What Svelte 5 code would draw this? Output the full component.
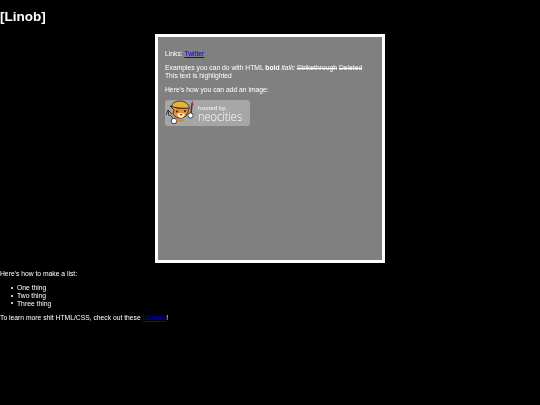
<script>
  const items = ['One thing', 'Two thing', 'Three thing'];
</script>

<div class="page">
  <h1>[Linob]</h1>
  <div class="box">
    <p>Links: <a href="#t">Twitter</a></p>
    <p>Examples you can do with HTML <b>bold</b> <i>italic</i> <s>Strikethrough</s> <s>Deleted</s><br />This text is highlighted</p>
    <p class="last">Here's how you can add an image:</p>
    <div class="badge">
      <svg class="mascot" width="33" height="26" viewBox="0 0 33 26">
        <path d="M6 7 Q8 1 15 1 Q21 1 24 6 L24 9 L14 8 Z" fill="#e8b23a" stroke="#3a2a1a" stroke-width="0.9" />
        <path d="M5 6 L9 10 L8 14 Q11 19 17 18 Q22 17 23 12 L24 8 Q14 10 5 6 Z" fill="#e8902f" stroke="#3a2a1a" stroke-width="0.9" />
        <path d="M12 14 Q16 12 20 14 Q19 18 15.5 18 Q13 17.5 12 14 Z" fill="#fbe9cf" />
        <circle cx="12" cy="11.5" r="1" fill="#222" />
        <circle cx="20" cy="11" r="1" fill="#222" />
        <path d="M15 14 L17.5 14 L16 16 Z" fill="#5a2a1a" />
        <path d="M27 4 L26 13" stroke="#5b2d20" stroke-width="1.6" />
        <path d="M27.3 0.5 L28.6 5 L25.8 5 Z" fill="#8b3a3a" />
        <circle cx="25.5" cy="15.5" r="2.6" fill="#fff" stroke="#333" stroke-width="0.9" />
        <path d="M3 10 L1 15 M3 10 L4 16 M3 10 L7 14 M5 15 L9 19" stroke="#333" stroke-width="1" fill="none" />
        <circle cx="9" cy="21" r="2.8" fill="#fff" stroke="#333" stroke-width="0.9" />
        <path d="M11 19 Q14 22 19 20" stroke="#d8872c" stroke-width="2" fill="none" />
      </svg>
      <div class="brand">
        <span class="hosted">hosted by,</span>
        <span class="neo">neocities</span>
      </div>
    </div>
  </div>
  <p>Here's how to make a list:</p>
  <ul>
    {#each items as item}
      <li>{item}</li>
    {/each}
  </ul>
  <p>To learn more shit HTML/CSS, check out these <a href="#l">tutorials</a>!</p>
</div>

<style>
  :global(body) {
    margin: 0;
    background: #000;
  }
  .page {
    height: 405px;
    overflow: hidden;
    box-sizing: border-box;
    padding-top: 9px;
    color: #fff;
    font-family: "Liberation Sans", Arial, sans-serif;
    font-size: 6.75px;
    line-height: 7.7px;
    filter: blur(0.35px);
  }
  h1 {
    margin: 0 0 9.5px;
    font-size: 13.5px;
    line-height: 15.5px;
  }
  .box {
    box-sizing: border-box;
    width: 230px;
    height: 229px;
    margin: 0 auto 6.75px;
    padding: 12.75px 7px;
    background: #808080;
    border: 3px solid #fff;
  }
  p {
    margin: 0 0 6.75px;
  }
  .last {
    margin-bottom: 6px;
  }
  a {
    color: #0000ee;
    text-decoration-thickness: 0.5px;
  }
  s {
    text-decoration-thickness: 0.5px;
  }
  .badge {
    display: flex;
    align-items: center;
    width: 85px;
    height: 26px;
    border-radius: 3px;
    background: #a6a6a6;
    overflow: hidden;
  }
  .mascot {
    flex: none;
  }
  .brand {
    display: flex;
    flex-direction: column;
    font-family: "Open Sans", sans-serif;
    color: #fff;
  }
  .hosted {
    font-size: 6px;
    line-height: 6px;
  }
  .neo {
    font-size: 12.5px;
    line-height: 11px;
    font-weight: 300;
    transform: scaleX(0.88);
    transform-origin: left;
  }
  ul {
    margin: 6.75px 0;
    padding: 0 0 0 10.5px;
    list-style: none;
  }
  li {
    display: flex;
    align-items: center;
    gap: 4.5px;
  }
  li::before {
    content: "";
    width: 2px;
    height: 2px;
    border-radius: 50%;
    background: #fff;
  }
</style>
